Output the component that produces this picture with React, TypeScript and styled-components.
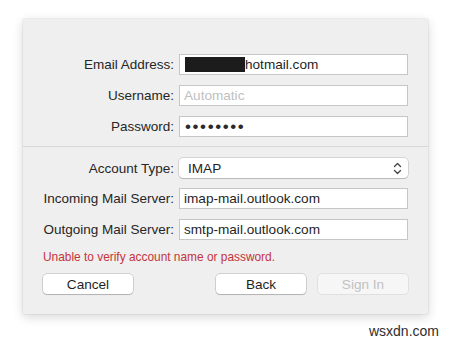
import React from "react";
import styled, { createGlobalStyle } from "styled-components";

const Global = createGlobalStyle`
  html, body { margin: 0; padding: 0; background: #ffffff; }
  body { font-family: "Liberation Sans", Arial, sans-serif; }
`;

const Page = styled.div`
  width: 451px;
  height: 342px;
  padding: 19px 0 0 23px;
  box-sizing: border-box;
  overflow: hidden;
`;

const Panel = styled.div`
  width: 405px;
  height: 295px;
  box-sizing: border-box;
  background: #efefef;
  box-shadow: 0 3px 10px rgba(0, 0, 0, 0.16), 0 0 1px rgba(0, 0, 0, 0.25);
  display: flex;
  flex-direction: column;
`;

const Fields = styled.div<{ $top: number }>`
  display: grid;
  grid-template-columns: 151px 229px;
  column-gap: 5px;
  row-gap: 10px;
  padding-top: ${(p) => p.$top}px;
`;

const Label = styled.div`
  font-size: 13.5px;
  color: #262626;
  text-align: right;
  align-self: center;
  white-space: nowrap;
`;

const Field = styled.div<{ $placeholder?: boolean }>`
  height: 21px;
  box-sizing: border-box;
  background: #ffffff;
  border: 1px solid #c6c6c6;
  padding: 0 4px;
  display: flex;
  align-items: center;
  font-size: 13.6px;
  color: ${(p) => (p.$placeholder ? "#c0c0c0" : "#1f1f1f")};
  white-space: nowrap;
`;

const Redact = styled.span`
  display: inline-block;
  width: 60px;
  height: 15px;
  background: #1c1c1c;
  margin-left: 1px;
`;

const Dots = styled.span`
  font-size: 17px;
  letter-spacing: 1.6px;
  color: #2a2a2a;
  margin-left: 1px;
`;

const Separator = styled.div`
  height: 1px;
  background: #d8d8d8;
  margin-top: 9px;
`;

const Select = styled.div`
  height: 20px;
  box-sizing: border-box;
  background: #ffffff;
  border-radius: 4px;
  box-shadow: 0 0 0 0.5px rgba(0, 0, 0, 0.22), 0 1px 1px rgba(0, 0, 0, 0.14);
  padding: 0 6px 0 9px;
  display: flex;
  align-items: center;
  justify-content: space-between;
  font-size: 13.6px;
  color: #1f1f1f;
`;

const ErrorText = styled.div`
  margin: 11px 0 0 20px;
  font-size: 11.9px;
  line-height: 13px;
  color: #c4343c;
`;

const ButtonRow = styled.div`
  display: flex;
  gap: 12px;
  padding: 0 20px;
  margin-top: 10px;
`;

const Spacer = styled.div`
  flex: 1;
`;

const Button = styled.div<{ $disabled?: boolean }>`
  width: 90px;
  height: 20px;
  box-sizing: border-box;
  border-radius: 4px;
  background: ${(p) => (p.$disabled ? "#f6f6f6" : "#ffffff")};
  box-shadow: ${(p) =>
    p.$disabled
      ? "0 0 0 0.5px rgba(0,0,0,0.12)"
      : "0 0 0 0.5px rgba(0,0,0,0.25), 0 1px 1px rgba(0,0,0,0.15)"};
  display: flex;
  align-items: center;
  justify-content: center;
  font-size: 13.6px;
  color: ${(p) => (p.$disabled ? "#c2c2c2" : "#1f1f1f")};
`;

const Watermark = styled.div`
  font-size: 14px;
  color: #2e2e2e;
  text-align: right;
  padding-right: 12px;
  margin-top: 9px;
  margin-left: -23px;
`;

const Chevrons = () => (
  <svg width="9" height="13" viewBox="0 0 9 13">
    <path d="M1.5 4.5 L4.5 1.5 L7.5 4.5" fill="none" stroke="#444" strokeWidth="1.3" strokeLinecap="round" strokeLinejoin="round" />
    <path d="M1.5 8.5 L4.5 11.5 L7.5 8.5" fill="none" stroke="#444" strokeWidth="1.3" strokeLinecap="round" strokeLinejoin="round" />
  </svg>
);

export default function App() {
  return (
    <>
      <Global />
      <Page>
        <Panel>
          <Fields $top={35}>
            <Label>Email Address:</Label>
            <Field>
              <Redact />
              hotmail.com
            </Field>
            <Label>Username:</Label>
            <Field $placeholder>Automatic</Field>
            <Label>Password:</Label>
            <Field>
              <Dots>••••••••</Dots>
            </Field>
          </Fields>
          <Separator />
          <Fields $top={11}>
            <Label>Account Type:</Label>
            <Select>
              <span>IMAP</span>
              <Chevrons />
            </Select>
            <Label>Incoming Mail Server:</Label>
            <Field>imap-mail.outlook.com</Field>
            <Label>Outgoing Mail Server:</Label>
            <Field>smtp-mail.outlook.com</Field>
          </Fields>
          <ErrorText>Unable to verify account name or password.</ErrorText>
          <ButtonRow>
            <Button>Cancel</Button>
            <Spacer />
            <Button>Back</Button>
            <Button $disabled>Sign In</Button>
          </ButtonRow>
        </Panel>
        <Watermark>wsxdn.com</Watermark>
      </Page>
    </>
  );
}
